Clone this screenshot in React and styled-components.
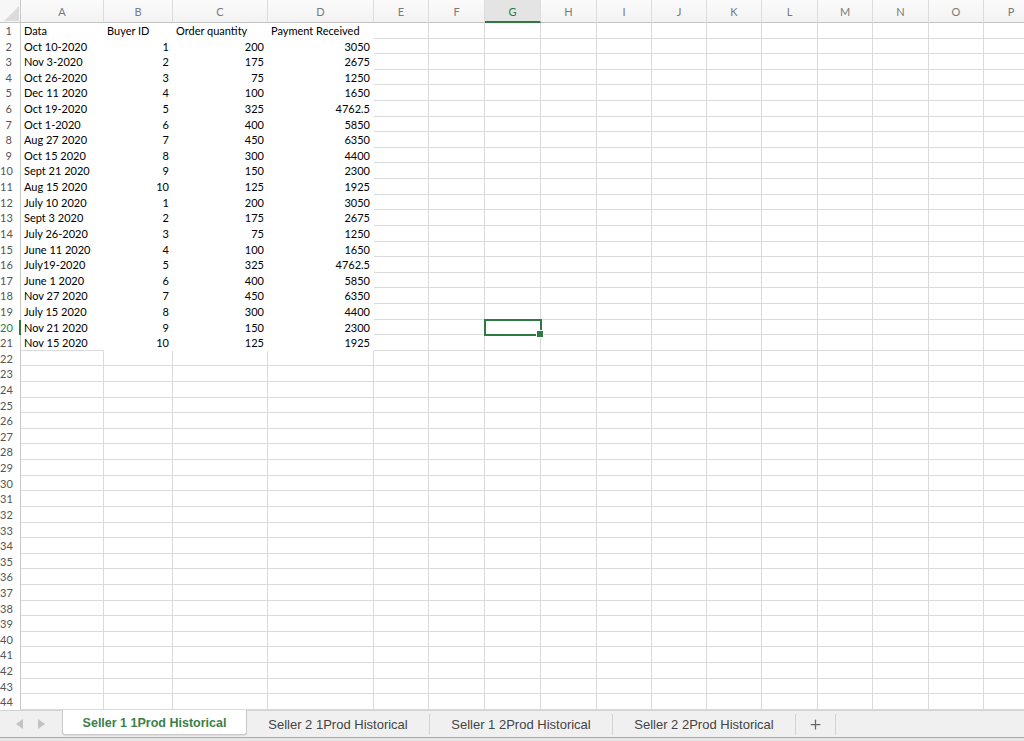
import React from "react";
import styled, { createGlobalStyle } from "styled-components";
import { Plus } from "lucide-react";

const cellFont = "Lato, 'Open Sans', 'Liberation Sans', sans-serif";
const tabFont = "'Liberation Sans', Arial, Helvetica, sans-serif";
const green = "#2f7a40";
const gridLine = "#dadada";

const COLS = ["A", "B", "C", "D", "E", "F", "G", "H", "I", "J", "K", "L", "M", "N", "O", "P"];
const COL_WIDTHS = [83, 69, 95, 106, 55, 56, 56, 56, 55, 55, 55, 56, 55, 56, 55, 55];
const ROW_COUNT = 44;
const ROW_H = 15.62;
const SELECTED = { row: 20, col: 6 };

const data = [
  ["Data", "Buyer ID", "Order quantity", "Payment Received"],
  ["Oct 10-2020", 1, 200, 3050],
  ["Nov 3-2020", 2, 175, 2675],
  ["Oct 26-2020", 3, 75, 1250],
  ["Dec 11 2020", 4, 100, 1650],
  ["Oct 19-2020", 5, 325, 4762.5],
  ["Oct 1-2020", 6, 400, 5850],
  ["Aug 27 2020", 7, 450, 6350],
  ["Oct 15 2020", 8, 300, 4400],
  ["Sept 21 2020", 9, 150, 2300],
  ["Aug 15 2020", 10, 125, 1925],
  ["July 10 2020", 1, 200, 3050],
  ["Sept 3 2020", 2, 175, 2675],
  ["July 26-2020", 3, 75, 1250],
  ["June 11 2020", 4, 100, 1650],
  ["July19-2020", 5, 325, 4762.5],
  ["June 1 2020", 6, 400, 5850],
  ["Nov 27 2020", 7, 450, 6350],
  ["July 15 2020", 8, 300, 4400],
  ["Nov 21 2020", 9, 150, 2300],
  ["Nov 15 2020", 10, 125, 1925],
];

const tabs = [
  "Seller 1 1Prod Historical",
  "Seller 2 1Prod Historical",
  "Seller 1 2Prod Historical",
  "Seller 2 2Prod Historical",
];

const GlobalStyle = createGlobalStyle`
  html, body, #root {
    margin: 0;
    height: 100%;
  }
  body {
    background: #fff;
    overflow: hidden;
  }
  * { box-sizing: border-box; }
`;

const Page = styled.div`
  height: 100%;
  display: flex;
  flex-direction: column;
  background: #fff;
`;

const Sheet = styled.div`
  flex: 1;
  overflow: hidden;
  display: grid;
  grid-template-columns: 21px ${COL_WIDTHS.map((w) => w + "px").join(" ")} 1fr;
  grid-template-rows: 23px repeat(${ROW_COUNT}, ${ROW_H}px);
  font-family: ${cellFont};
  font-size: 11px;
  color: #000;
`;

const Corner = styled.div`
  background: #f7f7f7;
  border-right: 1px solid #c9c9c9;
  border-bottom: 1px solid #c4c4c4;
  display: flex;
  align-items: flex-end;
  justify-content: flex-end;
  padding: 0 1px 1px 0;
`;

const ColHeader = styled.div`
  background: ${(p) => (p.$active ? "#e4e4e4" : "linear-gradient(#fbfbfb, #f3f3f3)")};
  color: ${(p) => (p.$active ? green : "#7a7a7a")};
  border-right: 1px solid #dcdcdc;
  border-bottom: ${(p) => (p.$active ? `2px solid ${green}` : "1px solid #c4c4c4")};
  display: flex;
  align-items: center;
  justify-content: center;
  padding-top: ${(p) => (p.$active ? "1px" : "0")};
  font-size: 11px;
`;

const RowHeader = styled.div`
  border-right: ${(p) => (p.$active ? `2px solid ${green}` : "1px solid #c9c9c9")};
  color: ${(p) => (p.$active ? green : "#555")};
  text-align: right;
  padding-right: ${(p) => (p.$active ? "7px" : "8px")};
  line-height: ${ROW_H}px;
  font-size: 11px;
  white-space: nowrap;
`;

const Cell = styled.div`
  position: relative;
  border-right: 1px solid ${(p) => (p.$noRight ? "transparent" : gridLine)};
  border-bottom: 1px solid ${(p) => (p.$noBottom ? "transparent" : gridLine)};
  text-align: ${(p) => (p.$num ? "right" : "left")};
  padding: 1px 3px 0;
  line-height: 14px;
  white-space: nowrap;
  overflow: visible;

  ${(p) =>
    p.$selected &&
    `
    &::after {
      content: "";
      position: absolute;
      left: -1px;
      top: -1px;
      right: -2px;
      bottom: -2px;
      border: 2px solid ${green};
      z-index: 2;
    }
    &::before {
      content: "";
      position: absolute;
      right: -4px;
      bottom: -4px;
      width: 6px;
      height: 6px;
      background: ${green};
      border: 1px solid #fff;
      z-index: 3;
    }
  `}
`;

const TabBar = styled.div`
  height: 31px;
  display: flex;
  flex-direction: column;
  background: #f0f0f0;
  font-family: ${tabFont};
`;

const TabRow = styled.div`
  height: 27px;
  display: flex;
  border-top: 1px solid #d2d2d2;
`;

const BottomStrip = styled.div`
  flex: 1;
  border-top: 1px solid #a9a9a9;
  background: #e6e6e6;
`;

const Nav = styled.div`
  width: 62px;
  display: flex;
  align-items: center;
  gap: 15px;
  padding-left: 16px;
`;

const Tab = styled.div`
  width: ${(p) => p.$w}px;
  display: flex;
  align-items: center;
  justify-content: center;
  font-size: ${(p) => (p.$active ? "12.5px" : "13px")};
  font-weight: ${(p) => (p.$active ? 700 : 400)};
  color: ${(p) => (p.$active ? "#3a8049" : "#444")};
  white-space: nowrap;
  ${(p) =>
    p.$active
      ? `
    background: #fff;
    margin-top: -1px;
    height: 25px;
    border: 1px solid #cacaca;
    border-top: none;
    border-radius: 0 0 3px 3px;
    box-shadow: 0 1px 1px rgba(0, 0, 0, 0.08);
    padding-top: 1px;
  `
      : `
    border-right: 1px solid #d4d4d4;
    margin: 3px 0 2px;
  `}
`;

const PlusTab = styled(Tab)`
  color: #666;
`;

function Arrow({ dir }) {
  return (
    <svg width="7" height="10" viewBox="0 0 7 10">
      <path d={dir === "left" ? "M7 0 L0 5 L7 10 Z" : "M0 0 L7 5 L0 10 Z"} fill="#c3c3c3" />
    </svg>
  );
}

function CornerMark() {
  return (
    <svg width="15" height="15" viewBox="0 0 15 15">
      <path d="M15 0 L15 15 L0 15 Z" fill="#dcdcdc" />
    </svg>
  );
}

function formatValue(v) {
  return typeof v === "number" ? String(v) : v;
}

export default function App() {
  const rows = [];
  for (let r = 1; r <= ROW_COUNT; r++) {
    const isSelRow = r === SELECTED.row;
    rows.push(
      <RowHeader key={`rh${r}`} $active={isSelRow}>
        {r}
      </RowHeader>
    );
    COLS.forEach((_, c) => {
      const filled = r <= 21 && c <= 3;
      const value = data[r - 1] ? data[r - 1][c] : undefined;
      rows.push(
        <Cell
          key={`c${r}-${c}`}
          $noRight={filled}
          $noBottom={filled && !(r === 21 && c === 0)}
          $num={typeof value === "number"}
          $selected={isSelRow && c === SELECTED.col}
        >
          {value !== undefined ? formatValue(value) : null}
        </Cell>
      );
    });
    rows.push(<Cell key={`rest${r}`} />);
  }

  return (
    <Page>
      <GlobalStyle />
      <Sheet>
        <Corner>
          <CornerMark />
        </Corner>
        {COLS.map((col, c) => (
          <ColHeader key={col} $active={c === SELECTED.col}>
            {col}
          </ColHeader>
        ))}
        <ColHeader />
        {rows}
      </Sheet>
      <TabBar>
        <TabRow>
          <Nav>
            <Arrow dir="left" />
            <Arrow dir="right" />
          </Nav>
          {tabs.map((t, i) => (
            <Tab key={t} $active={i === 0} $w={i === 0 ? 185 : 183}>
              {t}
            </Tab>
          ))}
          <PlusTab $w={40}>
            <Plus size={15} strokeWidth={2} />
          </PlusTab>
        </TabRow>
        <BottomStrip />
      </TabBar>
    </Page>
  );
}
